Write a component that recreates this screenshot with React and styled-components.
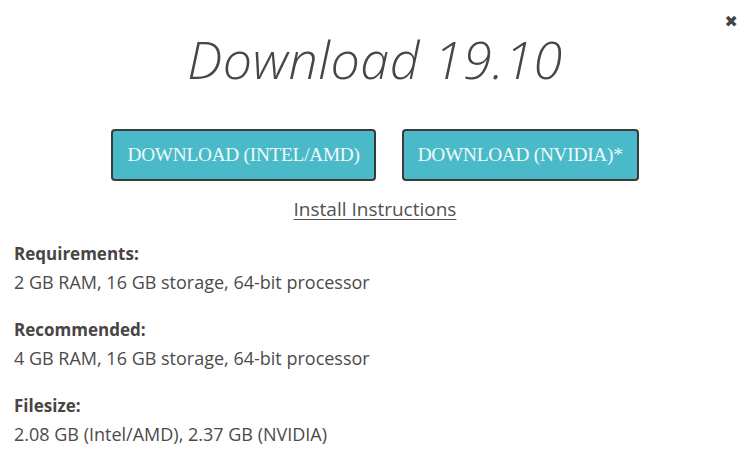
import styled, { createGlobalStyle } from 'styled-components';

const Global = createGlobalStyle`
  html, body {
    margin: 0;
    background: #ffffff;
  }
`;

function App() {
  return (
    <Page>
      <Global />
      <Close aria-label="close">✖</Close>
      <Title>Download 19.10</Title>
      <ButtonRow>
        <DownloadButton>DOWNLOAD (INTEL/AMD)</DownloadButton>
        <DownloadButton>DOWNLOAD (NVIDIA)*</DownloadButton>
      </ButtonRow>
      <InstallLink href="#">Install Instructions</InstallLink>
      <Specs>
        <Spec>
          <Label>Requirements:</Label>
          <Value>2 GB RAM, 16 GB storage, 64-bit processor</Value>
        </Spec>
        <Spec>
          <Label>Recommended:</Label>
          <Value>4 GB RAM, 16 GB storage, 64-bit processor</Value>
        </Spec>
        <Spec>
          <Label>Filesize:</Label>
          <Value>2.08 GB (Intel/AMD), 2.37 GB (NVIDIA)</Value>
        </Spec>
      </Specs>
    </Page>
  );
}

export default App;

const Page = styled.div`
  position: relative;
  width: 750px;
  height: 458px;
  box-sizing: border-box;
  padding: 24px 14px 0;
  display: flex;
  flex-direction: column;
  align-items: center;
  font-family: 'Open Sans', 'Noto Sans', sans-serif;
  color: #4a4444;
`;

const Close = styled.div`
  position: absolute;
  top: 12px;
  right: 12px;
  font-size: 16px;
  color: #444;
  font-family: 'DejaVu Sans', sans-serif;
`;

const Title = styled.h1`
  margin: 0;
  font-family: 'Open Sans', sans-serif;
  font-style: italic;
  font-weight: 300;
  font-size: 52px;
  line-height: 70px;
  letter-spacing: 0.5px;
  color: #4a4646;
`;

const ButtonRow = styled.div`
  display: flex;
  gap: 26px;
  margin-top: 35px;
`;

const DownloadButton = styled.button`
  height: 52px;
  padding: 0 14px;
  background: #4bbac8;
  border: 2px solid #3a3a3a;
  border-radius: 4px;
  color: #eefafb;
  font-family: 'Liberation Serif', 'DejaVu Serif', serif;
  font-size: 19.3px;
  letter-spacing: -0.25px;
`;

const InstallLink = styled.a`
  margin-top: 15px;
  font-size: 19px;
  color: #555050;
  text-decoration: underline;
  text-underline-offset: 3px;
`;

const Specs = styled.div`
  align-self: stretch;
  margin-top: 18px;
  display: flex;
  flex-direction: column;
  gap: 20px;
`;

const Spec = styled.div`
  display: flex;
  flex-direction: column;
`;

const Label = styled.div`
  font-weight: 700;
  font-size: 17px;
  line-height: 28px;
  color: #4a4444;
`;

const Value = styled.div`
  font-size: 18px;
  line-height: 28px;
  color: #4e4a4a;
`;
